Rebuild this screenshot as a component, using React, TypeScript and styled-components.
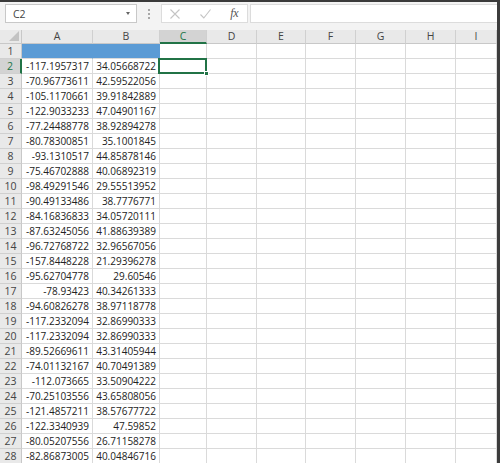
import React from "react";
import styled, { createGlobalStyle } from "styled-components";

const GlobalStyle = createGlobalStyle`
  html, body { margin: 0; padding: 0; background: #ffffff; }
  body { font-family: "Open Sans", "Liberation Sans", Arial, sans-serif; }
`;

const rows: [string, string][] = [
  ["-117.1957317", "34.05668722"],
  ["-70.96773611", "42.59522056"],
  ["-105.1170661", "39.91842889"],
  ["-122.9033233", "47.04901167"],
  ["-77.24488778", "38.92894278"],
  ["-80.78300851", "35.1001845"],
  ["-93.1310517", "44.85878146"],
  ["-75.46702888", "40.06892319"],
  ["-98.49291546", "29.55513952"],
  ["-90.49133486", "38.7776771"],
  ["-84.16836833", "34.05720111"],
  ["-87.63245056", "41.88639389"],
  ["-96.72768722", "32.96567056"],
  ["-157.8448228", "21.29396278"],
  ["-95.62704778", "29.60546"],
  ["-78.93423", "40.34261333"],
  ["-94.60826278", "38.97118778"],
  ["-117.2332094", "32.86990333"],
  ["-117.2332094", "32.86990333"],
  ["-89.52669611", "43.31405944"],
  ["-74.01132167", "40.70491389"],
  ["-112.073665", "33.50904222"],
  ["-70.25103556", "43.65808056"],
  ["-121.4857211", "38.57677722"],
  ["-122.3340939", "47.59852"],
  ["-80.05207556", "26.71158278"],
  ["-82.86873005", "40.04846716"],
];

const columns = ["A", "B", "C", "D", "E", "F", "G", "H", "I"];
const colTemplate = "22px 71px 67px 47px 50px 49px 50px 50px 50px 1fr";

const Window = styled.div`
  width: 500px;
  height: 463px;
  overflow: hidden;
  box-sizing: border-box;
  border-top: 2px solid #3a3a3a;
  border-right: 3px solid #3c3c3c;
  background: #ffffff;
  display: flex;
  flex-direction: column;
`;

const FormulaBar = styled.div`
  height: 28px;
  flex: none;
  background: #f3f3f3;
  display: flex;
  align-items: flex-start;
  padding: 2px 0 0 5px;
  box-sizing: border-box;
`;

const NameBox = styled.div`
  width: 132px;
  height: 19px;
  box-sizing: border-box;
  background: #fff;
  border: 1px solid #c8c8c8;
  display: flex;
  align-items: center;
  justify-content: space-between;
  padding: 0 6px 0 7px;
  font-size: 10.5px;
  color: #444;
`;

const Caret = styled.span`
  width: 0;
  height: 0;
  border-left: 2.5px solid transparent;
  border-right: 2.5px solid transparent;
  border-top: 3px solid #666;
`;

const Dots = styled.div`
  width: 24px;
  height: 19px;
  display: flex;
  flex-direction: column;
  align-items: center;
  justify-content: center;
  gap: 2px;
  span {
    width: 2px;
    height: 2px;
    background: #a8a8a8;
  }
`;

const ActionBox = styled.div`
  width: 87px;
  height: 19px;
  box-sizing: border-box;
  background: #fff;
  border: 1px solid #dcdcdc;
  display: flex;
  align-items: center;
  justify-content: space-between;
  padding: 0 9px 0 7px;
`;

const Fx = styled.span`
  font-family: "Liberation Serif", "Times New Roman", serif;
  font-style: italic;
  font-size: 12px;
  color: #555;
  letter-spacing: -0.5px;
`;

const FormulaInput = styled.div`
  flex: 1;
  height: 19px;
  margin-left: 2px;
  background: #fff;
  border: 1px solid #dcdcdc;
  border-right: none;
  box-sizing: border-box;
`;

const Grid = styled.div`
  display: grid;
  grid-template-columns: ${colTemplate};
  grid-auto-rows: 15px;
  grid-template-rows: 14px;
`;

const HeaderCell = styled.div<{ $active?: boolean }>`
  box-sizing: border-box;
  background: ${(p) => (p.$active ? "#d3d3d3" : "#e9e9e9")};
  border-right: 1px solid #d0d0d0;
  border-bottom: ${(p) => (p.$active ? "2px solid #217346" : "1px solid #c8c8c8")};
  color: ${(p) => (p.$active ? "#217346" : "#444")};
  font-size: 10.5px;
  display: flex;
  align-items: center;
  justify-content: center;
  line-height: 1;
`;

const Corner = styled.div`
  box-sizing: border-box;
  background: #e9e9e9;
  border-right: 1px solid #c8c8c8;
  border-bottom: 1px solid #c8c8c8;
  position: relative;
  &::after {
    content: "";
    position: absolute;
    right: 2px;
    bottom: 2px;
    width: 0;
    height: 0;
    border-left: 10px solid transparent;
    border-bottom: 10px solid #c3c3c3;
  }
`;

const RowHead = styled.div<{ $active?: boolean }>`
  box-sizing: border-box;
  background: ${(p) => (p.$active ? "#d3d3d3" : "#e9e9e9")};
  border-right: ${(p) => (p.$active ? "2px solid #217346" : "1px solid #c8c8c8")};
  border-bottom: 1px solid #d0d0d0;
  color: ${(p) => (p.$active ? "#217346" : "#444")};
  font-size: 10.5px;
  display: flex;
  align-items: center;
  justify-content: center;
`;

const Cell = styled.div<{ $fill?: boolean; $selected?: boolean }>`
  box-sizing: border-box;
  background: ${(p) => (p.$fill ? "#5b9bd5" : "#fff")};
  border-right: 1px solid ${(p) => (p.$fill ? "#5b9bd5" : "#dadada")};
  border-bottom: 1px solid #dadada;
  font-size: 10px;
  color: #222;
  display: flex;
  align-items: center;
  justify-content: flex-end;
  padding-right: 3px;
  white-space: nowrap;
  position: relative;
  ${(p) =>
    p.$selected &&
    `
    &::after {
      content: "";
      position: absolute;
      left: -2px;
      top: -1px;
      right: -1px;
      bottom: -1px;
      border: 2px solid #217346;
      z-index: 2;
    }
    &::before {
      content: "";
      position: absolute;
      right: -3px;
      bottom: -3px;
      width: 5px;
      height: 5px;
      background: #217346;
      border: 1px solid #fff;
      box-sizing: border-box;
      z-index: 3;
    }
  `}
`;

export default function App() {
  return (
    <>
      <GlobalStyle />
      <Window>
        <FormulaBar>
          <NameBox>
            C2
            <Caret />
          </NameBox>
          <Dots>
            <span />
            <span />
            <span />
          </Dots>
          <ActionBox>
            <svg width="12" height="12" viewBox="0 0 12 12">
              <path d="M1.5 1.5 L10.5 10.5 M10.5 1.5 L1.5 10.5" stroke="#c4c4c4" strokeWidth="1.1" fill="none" />
            </svg>
            <svg width="13" height="12" viewBox="0 0 13 12">
              <path d="M1.5 6.5 L4.8 10 L11.5 1.5" stroke="#c4c4c4" strokeWidth="1.1" fill="none" />
            </svg>
            <Fx>fx</Fx>
          </ActionBox>
          <FormulaInput />
        </FormulaBar>
        <Grid>
          <Corner />
          {columns.map((c) => (
            <HeaderCell key={c} $active={c === "C"}>
              {c}
            </HeaderCell>
          ))}
          <RowHead>1</RowHead>
          {columns.map((c) => (
            <Cell key={c} $fill={c === "A" || c === "B"} />
          ))}
          {rows.map(([a, b], i) => {
            const n = i + 2;
            return (
              <React.Fragment key={n}>
                <RowHead $active={n === 2}>{n}</RowHead>
                <Cell>{a}</Cell>
                <Cell>{b}</Cell>
                {columns.slice(2).map((c) => (
                  <Cell key={c} $selected={n === 2 && c === "C"} />
                ))}
              </React.Fragment>
            );
          })}
        </Grid>
      </Window>
    </>
  );
}
